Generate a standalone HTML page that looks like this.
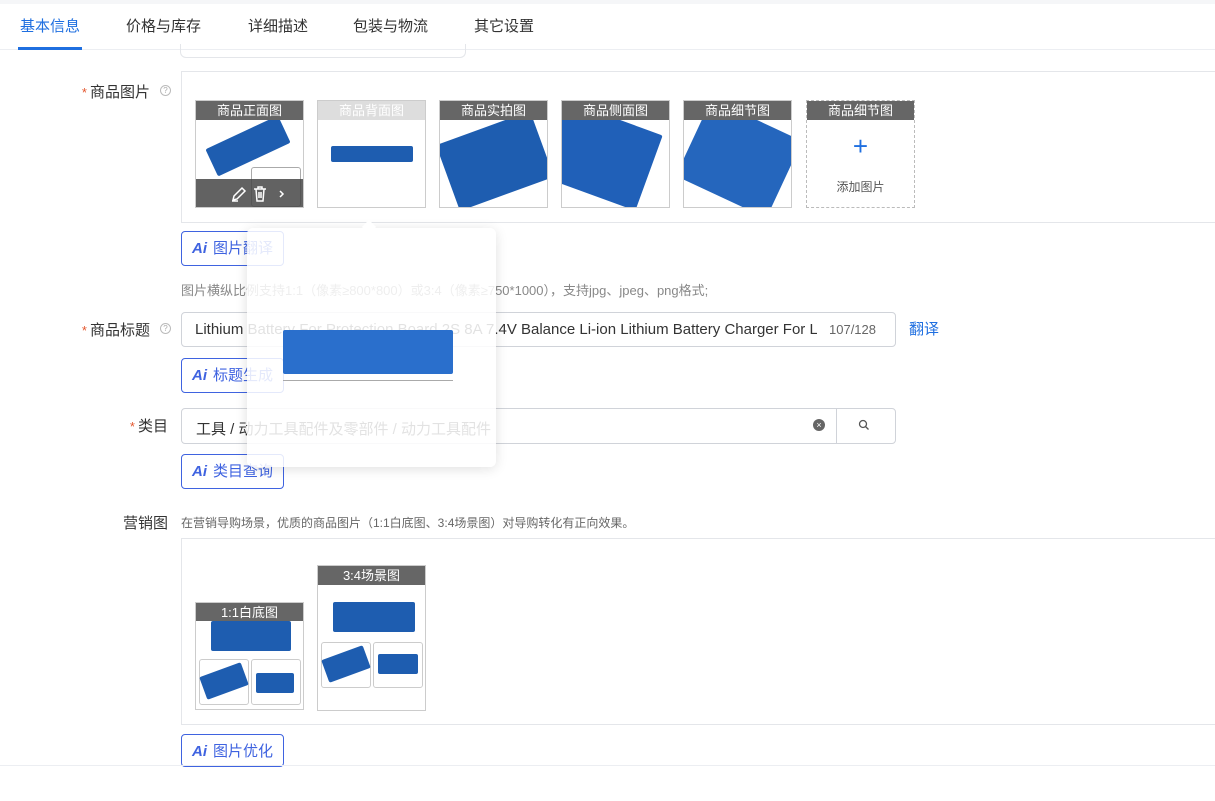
<!DOCTYPE html>
<html><head><meta charset="utf-8"><style>
*{box-sizing:border-box;margin:0;padding:0}
body{width:1215px;height:801px;overflow:hidden;background:#fff;font-family:"Liberation Sans","Noto Sans CJK SC",sans-serif;position:relative;color:#333}
.a{position:absolute}
.tab{position:absolute;top:15px;font-size:15px;color:#333}
.lbl{position:absolute;font-size:15px;color:#333;text-align:right;width:120px}
.lbl b{color:#e4572e;font-weight:normal;font-size:13px;margin-right:3px}
.ai{position:absolute;left:181px;height:35px;border:1px solid #3f63e0;border-radius:4px;padding:0 10px;font-size:15px;color:#3f63e0;line-height:33px;background:#fff}
.ai i{font-style:italic;font-weight:bold;margin-right:6px;font-family:"Liberation Sans",sans-serif}
.pic{position:absolute;width:109px;height:108px;border:1px solid #ccc;background:#fff;overflow:hidden}
.pic .h{position:relative;z-index:2;height:19px;background:#666;color:#fff;font-size:13px;text-align:center;line-height:19px}
.pcb{position:absolute;background:#1e5db0;border-radius:2px}
.inp{position:absolute;border:1px solid #d0d3d9;border-radius:4px;background:#fff}
</style></head><body>
<div class="a" style="left:0;top:0;width:1215px;height:4px;background:#f5f6f8"></div>
<div class="tab" style="left:20px;color:#1f6fe0">基本信息</div>
<div class="tab" style="left:126px">价格与库存</div>
<div class="tab" style="left:248px">详细描述</div>
<div class="tab" style="left:353px">包装与物流</div>
<div class="tab" style="left:474px">其它设置</div>
<div class="a" style="left:0;top:49px;width:1215px;height:1px;background:#eceef2"></div>
<div class="a" style="left:18px;top:47px;width:64px;height:3px;background:#1f6fe0"></div>
<div class="a" style="left:180px;top:44px;width:286px;height:14px;border:1px solid #e4e6ea;border-top:none;border-radius:0 0 6px 6px"></div>

<div class="lbl" style="left:30px;top:81px"><b>*</b>商品图片</div>
<div class="a" style="left:160px;top:85px;width:11px;height:11px;border:1px solid #bbb;border-radius:50%;font-size:8px;color:#aaa;text-align:center;line-height:9px">?</div>
<div class="a" style="left:181px;top:71px;width:1040px;height:152px;border:1px solid #e4e6ea"></div>

<div class="pic" style="left:195px;top:100px"><div class="h">商品正面图</div><div class="pcb" style="left:12px;top:30px;width:80px;height:30px;transform:rotate(-25deg)"></div><div class="a" style="left:55px;top:66px;width:50px;height:40px;border:1px solid #aaa;border-radius:3px"></div><div class="a" style="left:0;top:78px;width:109px;height:30px;background:rgba(70,70,70,.85)"></div>
<svg class="a" style="left:34px;top:84px" width="64" height="18" viewBox="0 0 64 18" fill="none" stroke="#fff" stroke-width="1.5"><path d="M3 15l1-4 8-8 3 3-8 8z M2 16h6"/><path d="M24 4h12 M28 4V2h4v2 M26 4l1 12h6l1-12 M29 7v6 M31 7v6"/><path d="M50 6l3 3-3 3"/></svg></div>
<div class="pic" style="left:317px;top:100px"><div class="h" style="background:#ddd">商品背面图</div><div class="pcb" style="left:13px;top:45px;width:82px;height:16px"></div></div>
<div class="pic" style="left:439px;top:100px"><div class="h">商品实拍图</div><div class="pcb" style="left:5px;top:25px;width:100px;height:70px;transform:rotate(-20deg)"></div></div>
<div class="pic" style="left:561px;top:100px"><div class="h">商品侧面图</div><div class="pcb" style="left:-10px;top:15px;width:100px;height:80px;background:#2060b8;transform:rotate(20deg)"></div></div>
<div class="pic" style="left:683px;top:100px"><div class="h">商品细节图</div><div class="pcb" style="left:5px;top:15px;width:100px;height:85px;background:#2566bd;transform:rotate(25deg)"></div></div>
<div class="pic" style="left:806px;top:100px;border:1px dashed #bbb"><div class="h">商品细节图</div><div class="a" style="left:0;top:30px;width:107px;text-align:center;font-size:26px;color:#1f6fe0;font-weight:300">+</div><div class="a" style="left:0;top:77px;width:107px;text-align:center;font-size:12px;color:#555">添加图片</div></div>

<div class="ai" style="top:231px"><i>Ai</i>图片翻译</div>
<div class="a" style="left:181px;top:280px;font-size:13px;color:#888">图片横纵比例支持1:1（像素≥800*800）或3:4（像素≥750*1000），支持jpg、jpeg、png格式;</div>

<div class="lbl" style="left:30px;top:319px"><b>*</b>商品标题</div>
<div class="a" style="left:160px;top:323px;width:11px;height:11px;border:1px solid #bbb;border-radius:50%;font-size:8px;color:#aaa;text-align:center;line-height:9px">?</div>
<div class="inp" style="left:181px;top:312px;width:715px;height:35px"></div>
<div class="a" style="left:195px;top:321px;font-size:15px;color:#333;white-space:nowrap;width:622px;overflow:hidden">Lithium Battery For Protection Board 2S 8A 7.4V Balance Li-ion Lithium Battery Charger For Li</div>
<div class="a" style="left:829px;top:322px;font-size:13px;color:#666">107/128</div>
<div class="a" style="left:909px;top:318px;font-size:15px;color:#1f6fe0">翻译</div>
<div class="ai" style="top:358px"><i>Ai</i>标题生成</div>

<div class="lbl" style="left:48px;top:415px"><b>*</b>类目</div>
<div class="inp" style="left:181px;top:408px;width:715px;height:36px"></div>
<div class="a" style="left:836px;top:409px;width:1px;height:34px;background:#d0d3d9"></div>
<div class="a" style="left:196px;top:418px;font-size:15px">工具 / 动力工具配件及零部件 / 动力工具配件</div>
<div class="a" style="left:813px;top:419px;width:12px;height:12px;border-radius:50%;background:#666;color:#fff;font-size:9px;text-align:center;line-height:12px">×</div>
<svg class="a" style="left:858px;top:419px" width="12" height="12" viewBox="0 0 12 12" fill="none" stroke="#555" stroke-width="1.3"><circle cx="5" cy="5" r="3.5"/><path d="M7.5 7.5l3 3"/></svg>
<div class="ai" style="top:454px"><i>Ai</i>类目查询</div>

<div class="lbl" style="left:48px;top:512px">营销图</div>
<div class="a" style="left:181px;top:514px;font-size:12px;color:#666">在营销导购场景，优质的商品图片（1:1白底图、3:4场景图）对导购转化有正向效果。</div>
<div class="a" style="left:181px;top:538px;width:1040px;height:187px;border:1px solid #e4e6ea"></div>
<div class="pic" style="left:195px;top:602px"><div class="h" style="height:18px">1:1白底图</div><div class="pcb" style="left:15px;top:18px;width:80px;height:30px"></div><div class="a" style="left:3px;top:56px;width:50px;height:46px;border:1px solid #ccc;border-radius:3px"></div><div class="a" style="left:55px;top:56px;width:50px;height:46px;border:1px solid #ccc;border-radius:3px"></div><div class="pcb" style="left:6px;top:66px;width:44px;height:24px;transform:rotate(-20deg)"></div><div class="pcb" style="left:60px;top:70px;width:38px;height:20px"></div></div>
<div class="pic" style="left:317px;top:565px;height:146px"><div class="h">3:4场景图</div><div class="pcb" style="left:15px;top:36px;width:82px;height:30px"></div><div class="a" style="left:3px;top:76px;width:50px;height:46px;border:1px solid #ccc;border-radius:3px"></div><div class="a" style="left:55px;top:76px;width:50px;height:46px;border:1px solid #ccc;border-radius:3px"></div><div class="pcb" style="left:6px;top:86px;width:44px;height:24px;transform:rotate(-20deg)"></div><div class="pcb" style="left:60px;top:88px;width:40px;height:20px"></div></div>
<div class="ai" style="top:734px;height:33px"><i>Ai</i>图片优化</div>
<div class="a" style="left:0;top:765px;width:1215px;height:1px;background:#eceef2"></div>

<div class="a" style="left:247px;top:228px;width:249px;height:239px;background:rgba(255,255,255,.86);border-radius:6px;box-shadow:0 2px 12px rgba(0,0,0,.12)"></div>
<div class="a" style="left:364px;top:222px;width:10px;height:10px;background:#fff;transform:rotate(45deg)"></div>
<div class="pcb" style="left:283px;top:330px;width:170px;height:44px;background:#2a6fcc"></div>
<div class="a" style="left:283px;top:380px;width:170px;height:1px;background:#aaa"></div>
</body></html>
